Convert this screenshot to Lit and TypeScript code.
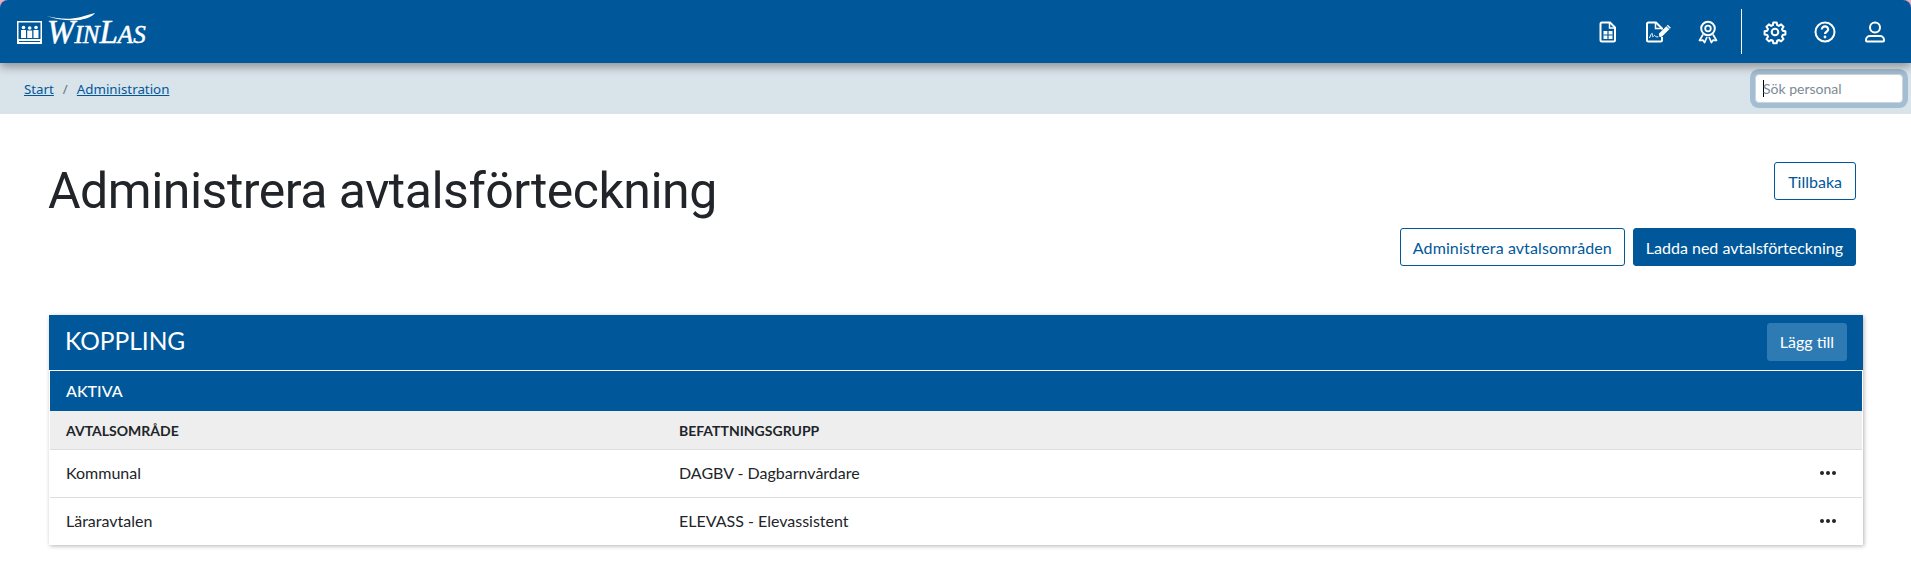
import { LitElement, html, css, svg } from 'lit';
import { customElement } from 'lit/decorators.js';

// icons are drawn on a 26px box so one unit is one pixel
const docIcon = svg`<path d="M7 3.500h8l5 5V21a1.500 1.500 0 0 1-1.500 1.500H7A1.500 1.500 0 0 1 5.500 21V5A1.500 1.500 0 0 1 7 3.500z" fill="none" stroke="#fff" stroke-width="2"/><path d="M14.500 3.500v5.500H20" fill="none" stroke="#fff" stroke-width="1.500"/><path d="M8.500 12h9v8h-9z" fill="#fff"/><path d="M13 12v8M8.500 16h9" stroke="#00589a" stroke-width="1.200"/>`;

const signIcon = svg`<path d="M17 18v3a1.500 1.500 0 0 1-1.500 1.500H3.500A1.500 1.500 0 0 1 2 21V5a1.500 1.500 0 0 1 1.500-1.500H11l6 6v1" fill="none" stroke="#fff" stroke-width="2"/><path d="M10.500 3.500V9.500H17" fill="none" stroke="#fff" stroke-width="1.500"/><path d="M4.500 19c1.200-3.500 2.300-5 2.800-4.500.6.600-.4 3.200.4 3.200s1.300-1.500 2-1.200c.6.200.6 1.300 1.600 1.300h2" fill="none" stroke="#fff" stroke-width="1"/><path d="M14.500 18l-.7-3.300 7.500-7.500 3 3-7.500 7.500z" fill="#fff"/><path d="M21.800 6.700l1-1 3 3-1 1z" fill="#fff"/>`;

const awardIcon = svg`<circle cx="13" cy="9.500" r="6.800" fill="none" stroke="#fff" stroke-width="2"/><circle cx="13" cy="9.500" r="2.800" fill="none" stroke="#fff" stroke-width="1.800"/><path d="M8 15.500L4.500 21.500l3.500-.3 1.600 2.300 2.400-5.500M18 15.500l3.500 6-3.500-.3-1.600 2.300-2.400-5.500" fill="none" stroke="#fff" stroke-width="1.700" stroke-linejoin="round"/>`;

const gearIcon = svg`<g transform="translate(1 1)"><path d="M10.300 2.500h3.400l.5 2.700 1.600.7 2.300-1.500 2.400 2.400-1.500 2.300.7 1.600 2.700.5v3.400l-2.700.5-.7 1.600 1.500 2.300-2.400 2.400-2.300-1.500-1.600.7-.5 2.700h-3.400l-.5-2.700-1.600-.7-2.300 1.500-2.400-2.400 1.500-2.300-.7-1.600-2.700-.5v-3.400l2.700-.5.7-1.600-1.500-2.300 2.400-2.400 2.300 1.500 1.600-.7z" fill="none" stroke="#fff" stroke-width="2" stroke-linejoin="round"/><circle cx="12" cy="12" r="3.300" fill="none" stroke="#fff" stroke-width="2"/></g>`;

const helpIcon = svg`<circle cx="13" cy="13" r="9.500" fill="none" stroke="#fff" stroke-width="2"/><path d="M9.800 10.500a3.200 3.200 0 0 1 6.400 0c0 2.200-3.200 2.300-3.200 4.500" fill="none" stroke="#fff" stroke-width="2.200"/><circle cx="13" cy="18" r="1.400" fill="#fff"/>`;

const userIcon = svg`<circle cx="13" cy="8.500" r="5" fill="none" stroke="#fff" stroke-width="2"/><path d="M8 17h10a4 4 0 0 1 4 4v.500a1 1 0 0 1-1 1H5a1 1 0 0 1-1-1V21a4 4 0 0 1 4-4z" fill="none" stroke="#fff" stroke-width="2"/>`;

const rows = [
  ['Kommunal', 'DAGBV - Dagbarnvårdare'],
  ['Läraravtalen', 'ELEVASS - Elevassistent'],
];

@customElement('app-root')
export class AppRoot extends LitElement {
  static styles = css`
    :host {
      display: block;
      font-family: Lato, sans-serif;
      color: #212529;
      background: #fff;
      min-height: 572px;
    }

    .chrome {
      background: #f4b3cb;
      position: relative;
    }

    .topbar {
      height: 63px;
      background: #00589a;
      display: flex;
      align-items: center;
      justify-content: space-between;
      padding: 0 11px 0 17px;
      box-shadow: 0 4px 10px rgba(0, 0, 0, 0.35);
      position: relative;
      border-radius: 8px 8px 0 0;
    }

    .logo {
      display: flex;
      align-items: center;
      gap: 5px;
      color: #fff;
      font-family: 'Liberation Serif', serif;
      font-style: italic;
      font-size: 33px;
      line-height: 1;
      -webkit-text-stroke: 0.5px #fff;
      position: relative;
      margin-top: 2px;
    }

    .logo small {
      font-size: 25px;
    }

    .swash {
      position: absolute;
      left: 30px;
      top: -4px;
    }

    .tools {
      display: flex;
      align-items: center;
    }

    .tools svg {
      width: 26px;
      height: 26px;
      display: block;
      margin-top: 1px;
    }

    .tools .tool {
      width: 50px;
      display: flex;
      justify-content: center;
    }

    .divider {
      width: 1px;
      height: 45px;
      background: #fff;
      margin: 0 8px;
    }

    .crumbs {
      height: 51px;
      background: #d9e3ea;
      display: flex;
      align-items: center;
      justify-content: space-between;
      padding: 0 8px 0 24px;
      font-family: 'Noto Sans', sans-serif;
      font-size: 13.300px;
    }

    .crumbs a {
      color: #00589a;
      text-decoration: underline;
    }

    .crumbs span {
      color: #6c757d;
      padding: 0 9px;
    }

    .search {
      width: 148px;
      height: 29px;
      box-sizing: border-box;
      border: 1px solid #ced4da;
      border-radius: 4px;
      background: #fff;
      box-shadow: 0 0 0 5px #a3bdd2;
      display: flex;
      align-items: center;
      padding-left: 7px;
      font-family: Lato, sans-serif;
      font-size: 14px;
      color: #7c8a96;
    }

    .search i {
      width: 1px;
      height: 17px;
      background: #000;
      margin-right: -1px;
    }

    main {
      padding: 0 48px;
    }

    .head {
      display: flex;
      justify-content: space-between;
      height: 201px;
      box-sizing: border-box;
      padding-top: 48px;
    }

    h1 {
      margin: -3px 0 0;
      font-family: Roboto, sans-serif;
      font-weight: 400;
      font-size: 50px;
      letter-spacing: -0.5px;
      line-height: 64px;
    }

    .actions {
      display: flex;
      flex-direction: column;
      align-items: flex-end;
      gap: 28px;
      padding-right: 7px;
    }

    .btn-row {
      display: flex;
      gap: 8px;
    }

    button {
      font: inherit;
      font-size: 16px;
      height: 38px;
      padding: 0 12px;
      border-radius: 3px;
      border: 1px solid #00589a;
      background: #fff;
      color: #00589a;
    }

    button.wide {
      letter-spacing: 0.1px;
    }

    button.back {
      padding: 0 13px;
    }

    button.solid {
      background: #00589a;
      color: #fff;
    }

    .card {
      margin-left: 1px;
      width: 1814px;
      box-shadow: 1px 1px 4px rgba(0, 0, 0, 0.3);
      border-radius: 3px 3px 0 0;
    }

    .card-head {
      height: 55px;
      background: #00589a;
      display: flex;
      align-items: flex-start;
      justify-content: space-between;
      padding: 8px 16px 0;
      box-sizing: border-box;
      color: #fff;
      font-size: 24.500px;
      line-height: 36px;
      margin-bottom: 1px;
    }

    button.add {
      width: 80px;
      padding: 0;
      background: #2e7bb4;
      border-color: #2e7bb4;
      color: #fff;
    }

    .section {
      height: 40px;
      box-sizing: border-box;
      background: #00589a;
      color: #fff;
      font-size: 16px;
      font-weight: 500;
      display: flex;
      align-items: center;
      padding: 0 0 2px 16px;
      margin: 0 1px;
    }

    .grid {
      display: grid;
      grid-template-columns: 613px 1fr 16px;
      align-items: center;
      padding: 0 26px 0 16px;
      margin: 0 1px;
      box-sizing: border-box;
    }

    .thead {
      height: 39px;
      background: #eee;
      font-size: 14px;
      font-weight: 700;
      border-bottom: 1px solid #ddd;
    }

    .row {
      height: 48px;
      padding-bottom: 2px;
      font-size: 16px;
      border-bottom: 1px solid #ddd;
    }

    .row:last-child {
      height: 47px;
      border-bottom: 0;
    }

    .dots {
      display: flex;
      justify-content: space-between;
    }

    .dots b {
      width: 4px;
      height: 4px;
      border-radius: 50%;
      background: #212529;
    }
  `;

  render() {
    return html`
      <div class="chrome">
        <div class="topbar">
          <div class="logo">
            <svg width="25" height="23" viewBox="0 0 25 23">
              <path d="M.75 .75h23.500v18H.75z" fill="none" stroke="#fff" stroke-width="1.500"/>
              <path d="M0 18h25v5H0z" fill="#fff"/>
              <path d="M2 20h21v1H2z" fill="#00589a"/>
              <g fill="#fff">
                <circle cx="6.500" cy="6.500" r="1.800"/><path d="M4 9h5v8H4z"/>
                <circle cx="12.700" cy="7" r="1.800"/><path d="M10.200 9.500h5v7.500h-5z"/>
                <circle cx="19" cy="6.500" r="1.800"/><path d="M16.500 9h5v8h-5z"/>
              </g>
            </svg>
            <span>W<small>IN</small>L<small>AS</small></span>
            <svg class="swash" width="50" height="10" viewBox="0 0 50 10">
              <path d="M0 4c12 3 22 4 34 1 4-1 9-3 14-4-3 4-10 6-15 7C22 9 10 8 0 4z" fill="#fff"/>
            </svg>
          </div>
          <div class="tools">
            <div class="tool"><svg viewBox="0 0 26 26">${docIcon}</svg></div>
            <div class="tool"><svg viewBox="0 0 26 26">${signIcon}</svg></div>
            <div class="tool"><svg viewBox="0 0 26 26">${awardIcon}</svg></div>
            <div class="divider"></div>
            <div class="tool"><svg viewBox="0 0 26 26">${gearIcon}</svg></div>
            <div class="tool"><svg viewBox="0 0 26 26">${helpIcon}</svg></div>
            <div class="tool"><svg viewBox="0 0 26 26">${userIcon}</svg></div>
          </div>
        </div>
      </div>
      <div class="crumbs">
        <div><a>Start</a><span>/</span><a>Administration</a></div>
        <div class="search"><i></i>Sök personal</div>
      </div>
      <main>
        <div class="head">
          <h1>Administrera avtalsförteckning</h1>
          <div class="actions">
            <button class="back">Tillbaka</button>
            <div class="btn-row">
              <button class="wide">Administrera avtalsområden</button>
              <button class="solid">Ladda ned avtalsförteckning</button>
            </div>
          </div>
        </div>
        <div class="card">
          <div class="card-head">
            <span>KOPPLING</span>
            <button class="add">Lägg till</button>
          </div>
          <div class="section">AKTIVA</div>
          <div class="grid thead"><span>AVTALSOMRÅDE</span><span>BEFATTNINGSGRUPP</span><span></span></div>
          ${rows.map(
            (r) => html`<div class="grid row">
              <span>${r[0]}</span><span>${r[1]}</span>
              <span class="dots"><b></b><b></b><b></b></span>
            </div>`
          )}
        </div>
      </main>
    `;
  }
}
